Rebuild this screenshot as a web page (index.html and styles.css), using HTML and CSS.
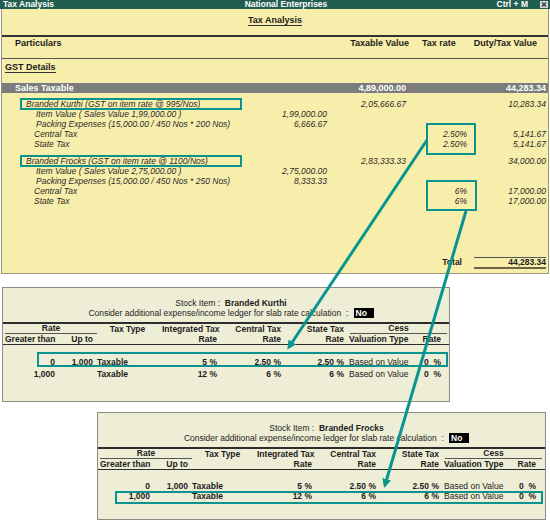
FILE: index.html
```html
<!doctype html>
<html lang="en">
  <head>
    <meta charset="UTF-8" />
    <meta name="viewport" content="width=device-width, initial-scale=1.0" />
    <title>Tax Analysis</title>
    <link rel="stylesheet" href="styles.css">
  </head>
  <body>
    <div class="page">
      <div class="titlebar">
        <span class="tb-left">Tax Analysis</span>
        <span class="tb-center">National Enterprises</span>
        <span class="tb-right">Ctrl + M
          <span class="close">
            <svg width="8" height="7" viewBox="0 0 8 7"><path d="M2 1.5 L6 5.5 M6 1.5 L2 5.5" stroke="#333" stroke-width="1.2"/></svg>
          </span>
        </span>
      </div>

      <div class="report">
        <div class="report-title"><span>Tax Analysis</span></div>
        <div class="report-head">
          <span class="h-part">Particulars</span>
          <span class="h-val">Taxable Value</span>
          <span class="h-rate">Tax rate</span>
          <span class="h-val">Duty/Tax Value</span>
        </div>
        <div class="section"><span>GST Details</span></div>

        <div class="line bar">
          <span class="lvl0">Sales Taxable</span><span></span><span>4,89,000.00</span><span></span><span>44,283.34</span>
        </div>

        <div class="group">
          <div class="line">
            <span><span class="item-box">Branded Kurthi (GST on item rate @ 995/Nos)</span></span><span></span><span>2,05,666.67</span><span></span><span>10,283.34</span>
          </div>
          <div class="line">
            <span class="lvl2">Item Value ( Sales Value 1,99,000.00 )</span><span>1,99,000.00</span><span></span><span></span><span></span>
          </div>
          <div class="line">
            <span class="lvl2">Packing Expenses (15,000.00 / 450 Nos * 200 Nos)</span><span>6,666.67</span><span></span><span></span><span></span>
          </div>
          <div class="line">
            <span class="lvl3">Central Tax</span><span></span><span></span><span>2.50%</span><span>5,141.67</span>
          </div>
          <div class="line">
            <span class="lvl3">State Tax</span><span></span><span></span><span>2.50%</span><span>5,141.67</span>
          </div>
        </div>

        <div class="group">
          <div class="line">
            <span><span class="item-box">Branded Frocks (GST on item rate @ 1100/Nos)</span></span><span></span><span>2,83,333.33</span><span></span><span>34,000.00</span>
          </div>
          <div class="line">
            <span class="lvl2">Item Value ( Sales Value 2,75,000.00 )</span><span>2,75,000.00</span><span></span><span></span><span></span>
          </div>
          <div class="line">
            <span class="lvl2">Packing Expenses (15,000.00 / 450 Nos * 250 Nos)</span><span>8,333.33</span><span></span><span></span><span></span>
          </div>
          <div class="line">
            <span class="lvl3">Central Tax</span><span></span><span></span><span>6%</span><span>17,000.00</span>
          </div>
          <div class="line">
            <span class="lvl3">State Tax</span><span></span><span></span><span>6%</span><span>17,000.00</span>
          </div>
        </div>

        <div class="line total">
          <span></span><span></span><span></span><span class="total-label">Total</span><span class="total-amt">44,283.34</span>
        </div>
      </div>

      <div class="slab slab-kurthi">
        <div class="stock">Stock Item : &nbsp;<b>Branded Kurthi</b></div>
        <div class="consider">Consider additional expense/income ledger for slab rate calculation &nbsp;: <span class="no">No</span></div>
        <div class="slab-head">
          <div class="slab-grid">
            <span class="rate-group">Rate</span>
            <span class="center">Tax Type</span>
            <span class="right">Integrated Tax</span>
            <span class="right">Central Tax</span>
            <span class="right">State Tax</span>
            <span class="cess-group">Cess</span>
          </div>
          <div class="slab-grid">
            <span>Greater than</span>
            <span class="right">Up to</span>
            <span></span>
            <span class="right">Rate</span>
            <span class="right">Rate</span>
            <span class="right">Rate</span>
            <span class="pad">Valuation Type</span>
            <span class="right">Rate</span>
          </div>
        </div>
        <div class="slab-rows">
          <div class="slab-grid hl">
            <span class="right">0</span><span class="right">1,000</span><span class="type">Taxable</span>
            <span class="right">5 %</span><span class="right">2.50 %</span><span class="right">2.50 %</span>
            <span class="pad plain">Based on Value</span><span class="right">0&nbsp;&nbsp;%</span>
          </div>
          <div class="slab-grid">
            <span class="right">1,000</span><span></span><span class="type">Taxable</span>
            <span class="right">12 %</span><span class="right">6 %</span><span class="right">6 %</span>
            <span class="pad plain">Based on Value</span><span class="right">0&nbsp;&nbsp;%</span>
          </div>
        </div>
      </div>

      <div class="slab slab-frocks">
        <div class="stock">Stock Item : &nbsp;<b>Branded Frocks</b></div>
        <div class="consider">Consider additional expense/income ledger for slab rate calculation &nbsp;: <span class="no">No</span></div>
        <div class="slab-head">
          <div class="slab-grid">
            <span class="rate-group">Rate</span>
            <span class="center">Tax Type</span>
            <span class="right">Integrated Tax</span>
            <span class="right">Central Tax</span>
            <span class="right">State Tax</span>
            <span class="cess-group">Cess</span>
          </div>
          <div class="slab-grid">
            <span>Greater than</span>
            <span class="right">Up to</span>
            <span></span>
            <span class="right">Rate</span>
            <span class="right">Rate</span>
            <span class="right">Rate</span>
            <span class="pad">Valuation Type</span>
            <span class="right">Rate</span>
          </div>
        </div>
        <div class="slab-rows">
          <div class="slab-grid">
            <span class="right">0</span><span class="right">1,000</span><span class="type">Taxable</span>
            <span class="right">5 %</span><span class="right">2.50 %</span><span class="right">2.50 %</span>
            <span class="pad plain">Based on Value</span><span class="right">0&nbsp;&nbsp;%</span>
          </div>
          <div class="slab-grid hl">
            <span class="right">1,000</span><span></span><span class="type">Taxable</span>
            <span class="right">12 %</span><span class="right">6 %</span><span class="right">6 %</span>
            <span class="pad plain">Based on Value</span><span class="right">0&nbsp;&nbsp;%</span>
          </div>
        </div>
      </div>

      <!-- call-out boxes and arrows drawn over the report -->
      <svg class="marks" width="550" height="525" viewBox="0 0 550 525">
        <defs>
          <marker id="head" markerWidth="3" markerHeight="3" refX="2" refY="1.5" orient="auto" markerUnits="strokeWidth">
            <path d="M0,0 L3,1.5 L0,3 Z" fill="#0a9490" />
          </marker>
        </defs>
        <rect x="427" y="124" width="48" height="30" />
        <rect x="427" y="181" width="49" height="29" />
        <line x1="427" y1="140" x2="289" y2="347" marker-end="url(#head)" />
        <line x1="466" y1="211" x2="385" y2="485" marker-end="url(#head)" />
      </svg>
    </div>
  </body>
</html>
```

FILE: styles.css
```css
body {
  margin: 0;
  background-color: white;
  font-family: "Liberation Sans", Arial, sans-serif;
  color: #1c1c1c;
}

.page {
  position: relative;
  width: 550px;
  height: 525px;
  overflow: hidden;
}

/* window title */
.titlebar {
  display: grid;
  grid-template-columns: 1fr auto 1fr;
  height: 9px;
  background-color: #215e4f;
  color: white;
  font-size: 8.5px;
  font-weight: bold;
  line-height: 9px;
}

.tb-left {
  padding-left: 3px;
}

.tb-center {
  padding-left: 22px;
}

.tb-right {
  display: flex;
  justify-content: flex-end;
  align-items: center;
  gap: 12px;
  padding-right: 2px;
}

.close {
  display: block;
  width: 8px;
  height: 7px;
  background-color: #d6d6d6;
}

.close svg {
  display: block;
}

/* tax analysis report */
.report {
  margin-left: 1px;
  width: 548px;
  height: 265px;
  box-sizing: border-box;
  border: 1px solid #9c9680;
  border-top: none;
  background-color: #f8eeab;
  font-size: 9px;
}

.report-title {
  height: 28px;
  box-sizing: border-box;
  padding-top: 6px;
  border-bottom: 2px solid #333;
  text-align: center;
  font-weight: bold;
  line-height: 10px;
}

.report-title span {
  display: inline-block;
  border-bottom: 1px solid #333;
}

.report-head {
  display: grid;
  grid-template-columns: 1fr 70px 48px 80px;
  height: 22px;
  box-sizing: border-box;
  padding: 1px 11px 0 0;
  border-bottom: 1px solid #555;
  font-weight: bold;
  line-height: 10px;
}

.h-part {
  padding-left: 13px;
}

.h-val {
  text-align: right;
  white-space: nowrap;
}

.h-rate {
  padding-left: 13px;
  white-space: nowrap;
}

.section {
  height: 24px;
  box-sizing: border-box;
  padding: 3px 0 0 3px;
  font-weight: bold;
  line-height: 10px;
}

.section span {
  display: inline-block;
  border-bottom: 1px solid #333;
}

.line {
  display: grid;
  grid-template-columns: 1fr 80px 79px 61px 79px;
  padding-right: 2px;
  height: 10px;
  font-size: 8.5px;
  font-style: italic;
  line-height: 10px;
  color: #2a2a2a;
  white-space: nowrap;
}

.line > span + span {
  text-align: right;
}

.bar {
  height: 10px;
  margin-top: 0;
  background-color: #7c7c7c;
  color: white;
  font-style: normal;
  font-weight: bold;
  font-size: 9px;
}

.lvl0 {
  padding-left: 13px;
}

.lvl2 {
  padding-left: 34px;
}

.lvl3 {
  padding-left: 32px;
}

.group {
  margin-top: 6px;
}

.group + .group {
  margin-top: 7px;
}

.item-box {
  display: inline-block;
  width: 220px;
  height: 10px;
  box-sizing: border-box;
  margin-left: 19px;
  padding-left: 5px;
  outline: 2px solid #0a9490;
  outline-offset: -1px;
}

.total {
  margin-top: 51px;
  height: 12px;
  font-style: normal;
  font-weight: bold;
  color: #1c1c1c;
}

.total-label {
  padding-right: 5px;
}

.total-amt {
  margin-left: 7px;
  border-top: 1px solid #555;
  border-bottom: 2px solid #6b6245;
  line-height: 9px;
}

/* slab rate panels */
.slab {
  box-sizing: border-box;
  border: 1px solid #8c8c84;
  background-color: #eeeed6;
  font-size: 8.5px;
}

.slab-kurthi {
  margin: 13px 0 0 2px;
  width: 448px;
  height: 115px;
}

.slab-frocks {
  margin: 10px 0 0 97px;
  width: 449px;
  height: 108px;
}

.stock,
.consider {
  text-align: center;
  padding-left: 10px;
  line-height: 10px;
}

.stock {
  padding-top: 10px;
}

.no {
  display: inline-block;
  width: 20px;
  margin-left: 3px;
  padding-left: 2px;
  box-sizing: border-box;
  background-color: black;
  color: white;
  font-weight: bold;
  text-align: left;
}

.slab-head {
  margin-top: 4px;
  border-top: 2px solid #2d2d2d;
  border-bottom: 1px solid #2d2d2d;
}

.slab-grid {
  display: grid;
  grid-template-columns: 50px 38px 69px 55px 64px 63px 73px 24px;
  padding-left: 2px;
  font-weight: bold;
  line-height: 10px;
  white-space: nowrap;
}

.right {
  text-align: right;
}

.center {
  text-align: center;
}

.pad {
  padding-left: 5px;
}

.type {
  padding-left: 4px;
}

.plain {
  font-weight: normal;
}

.rate-group {
  grid-column: 1 / 3;
  margin-right: -4px;
  text-align: center;
  line-height: 9px;
  border-bottom: 1px solid #555;
}

.cess-group {
  grid-column: 7 / 9;
  margin: 0 -6px 0 6px;
  text-align: center;
  line-height: 9px;
  border-bottom: 1px solid #555;
}

.slab-rows {
  margin-top: 11px;
}

.slab-kurthi .slab-rows .slab-grid {
  line-height: 12px;
}

.hl {
  position: relative;
}

.hl::before {
  content: "";
  position: absolute;
  border: 2px solid #0a9490;
}

.slab-kurthi .hl::before {
  left: 34px;
  right: 1px;
  top: -4px;
  bottom: 1px;
}

.slab-frocks .hl::before {
  left: 17px;
  right: 2px;
  top: 0;
  bottom: -3px;
}

.marks {
  position: absolute;
  top: 0;
  left: 0;
  pointer-events: none;
}

.marks rect,
.marks line {
  fill: none;
  stroke: #0a9490;
}

.marks rect {
  stroke-width: 2;
}

.marks line {
  stroke-width: 3;
}
```
